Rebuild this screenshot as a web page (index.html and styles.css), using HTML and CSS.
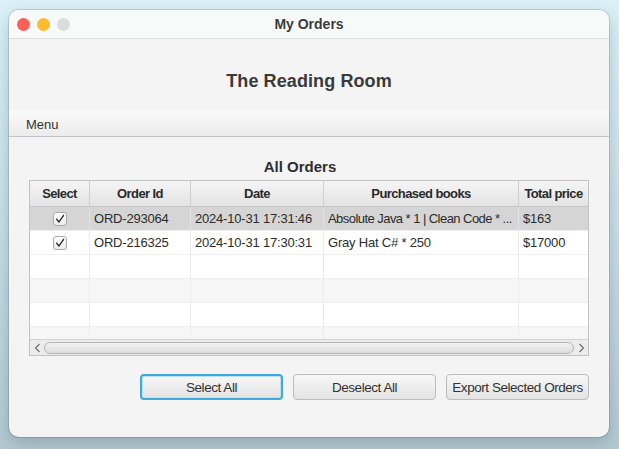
FILE: index.html
```html
<!DOCTYPE html>
<html>
<head>
<meta charset="utf-8">
<link rel="stylesheet" href="styles.css">
</head>
<body>
<div class="window">
  <div class="titlebar">
    <div class="lights">
      <span class="light red"></span>
      <span class="light yellow"></span>
      <span class="light gray"></span>
    </div>
    <div class="wtitle">My Orders</div>
  </div>
  <div class="header">The Reading Room</div>
  <div class="menubar"><span class="menu">Menu</span></div>
  <div class="content">
    <div class="section-title">All Orders</div>
    <div class="table">
      <div class="row head">
        <div class="c center">Select</div>
        <div class="c center">Order Id</div>
        <div class="c center">Date</div>
        <div class="c center">Purchased books</div>
        <div class="c center">Total price</div>
      </div>
      <div class="body">
        <div class="row sel">
          <div class="c center"><span class="cb"><svg width="12" height="12" viewBox="0 0 12 12"><path d="M2.6 6.2 L5 9 L9.6 2.4" fill="none" stroke="#1e1e1e" stroke-width="1.3" stroke-linecap="round" stroke-linejoin="round"/></svg></span></div>
          <div class="c">ORD-293064</div>
          <div class="c">2024-10-31 17:31:46</div>
          <div class="c ell">Absolute Java * 1 | Clean Code * ...</div>
          <div class="c">$163</div>
        </div>
        <div class="row odd">
          <div class="c center"><span class="cb"><svg width="12" height="12" viewBox="0 0 12 12"><path d="M2.6 6.2 L5 9 L9.6 2.4" fill="none" stroke="#1e1e1e" stroke-width="1.3" stroke-linecap="round" stroke-linejoin="round"/></svg></span></div>
          <div class="c">ORD-216325</div>
          <div class="c">2024-10-31 17:30:31</div>
          <div class="c">Gray Hat C# * 250</div>
          <div class="c">$17000</div>
        </div>
        <div class="row"><div class="c"></div><div class="c"></div><div class="c"></div><div class="c"></div><div class="c"></div></div>
        <div class="row odd"><div class="c"></div><div class="c"></div><div class="c"></div><div class="c"></div><div class="c"></div></div>
        <div class="row"><div class="c"></div><div class="c"></div><div class="c"></div><div class="c"></div><div class="c"></div></div>
        <div class="row odd"><div class="c"></div><div class="c"></div><div class="c"></div><div class="c"></div><div class="c"></div></div>
      </div>
      <div class="hscroll">
        <span class="arrow">
          <svg width="7" height="10" viewBox="0 0 7 10"><path d="M5.5 1 L1.5 5 L5.5 9" fill="none" stroke="#6a6a6a" stroke-width="1.1"/></svg>
        </span>
        <span class="thumb"></span>
        <span class="arrow">
          <svg width="7" height="10" viewBox="0 0 7 10"><path d="M1.5 1 L5.5 5 L1.5 9" fill="none" stroke="#6a6a6a" stroke-width="1.1"/></svg>
        </span>
      </div>
    </div>
    <div class="buttons">
      <button class="btn focus">Select All</button>
      <button class="btn">Deselect All</button>
      <button class="btn">Export Selected Orders</button>
    </div>
  </div>
</div>
</body>
</html>
```
FILE: styles.css
```css
html, body {
  margin: 0;
  height: 100%;
}
body {
  background: linear-gradient(180deg, #dcf0f7 0%, #c9dee6 50%, #b4c9d1 100%);
  padding: 10px 0 0 9px;
  box-sizing: border-box;
  font-family: "Liberation Sans", Arial, sans-serif;
  color: #333;
  overflow: hidden;
}
.window {
  width: 600px;
  height: 427px;
  background: #f4f4f4;
  border-radius: 10px;
  overflow: hidden;
  box-shadow: 0 0 0 1px rgba(0,0,0,0.12), 0 6px 16px rgba(40,70,80,0.25);
  display: flex;
  flex-direction: column;
}
.titlebar {
  height: 28px;
  background: #f8f9f9;
  border-bottom: 1px solid #dcdcdc;
  display: flex;
  align-items: center;
  position: relative;
}
.lights {
  display: flex;
  gap: 7px;
  padding-left: 8px;
}
.light {
  width: 13px;
  height: 13px;
  border-radius: 50%;
  display: block;
}
.red { background: #fe5f57; }
.yellow { background: #febc2e; }
.gray { background: #dcdcdc; }
.wtitle {
  position: absolute;
  left: 0;
  right: 0;
  text-align: center;
  font-weight: bold;
  font-size: 14px;
  color: #3c3c3c;
  pointer-events: none;
}
.header {
  height: 71px;
  display: flex;
  align-items: center;
  justify-content: center;
  padding-top: 14px;
  box-sizing: border-box;
  font-weight: bold;
  font-size: 18px;
  letter-spacing: 0.1px;
  color: #3a3a3a;
}
.menubar {
  background: linear-gradient(180deg, #fafafa 0%, #ececec 100%);
  border-bottom: 1px solid #c4c4c4;
  display: flex;
  align-items: center;
  padding: 2px 0 0 17px;
  box-sizing: content-box;
  height: 24px;
  font-size: 13px;
  color: #333;
}
.content {
  padding: 0 20px 0 20px;
  display: flex;
  flex-direction: column;
}
.section-title {
  text-align: center;
  font-weight: bold;
  font-size: 15px;
  color: #2e2e2e;
  height: 43px;
  line-height: 18px;
  padding: 21px 18px 0 0;
  box-sizing: border-box;
}
.table {
  width: 560px;
  height: 176px;
  border: 1px solid #c2c2c2;
  box-sizing: border-box;
  background: #fff;
  display: flex;
  flex-direction: column;
  overflow: hidden;
}
.row {
  display: grid;
  grid-template-columns: 60px 101px 133px 195px 69px;
  height: 24px;
  font-size: 13px;
}
.row .c {
  border-right: 1px solid #ececec;
  padding: 0 4px;
  display: flex;
  align-items: center;
  white-space: nowrap;
  overflow: hidden;
  color: #2c2c2c;
  letter-spacing: -0.2px;
}
.row .c:last-child { border-right: none; }
.row .center { justify-content: center; }
.row .ell {
  letter-spacing: -0.55px;
}
.head {
  height: 25px;
  background: linear-gradient(180deg, #f5f5f5 0%, #e3e3e3 100%);
  border-bottom: 1px solid #c8c8c8;
  font-weight: bold;
}
.head .c {
  border-right: 1px solid #cfcfcf;
  color: #2a2a2a;
  letter-spacing: -0.6px;
}
.body {
  flex: 1;
  overflow: hidden;
}
.body .row { border-bottom: 1px solid #efefef; height: 23px; }
.sel { background: #d5d5d5; }
.sel .c { border-right-color: #e2e2e2; }
.odd { background: #fafafa; }
.body .row:nth-child(4), .body .row:nth-child(6) { background: #f6f6f6; }
.body .row:nth-child(2) { background: #fff; }
.cb {
  width: 14px;
  height: 14px;
  border: 1px solid #ababab;
  border-radius: 3px;
  background: linear-gradient(180deg, #fdfdfd, #ececec);
  box-sizing: border-box;
  display: flex;
  align-items: center;
  justify-content: center;
}
.hscroll {
  height: 15px;
  flex: none;
  background: #ececec;
  border-top: 1px solid #d2d2d2;
  display: flex;
  align-items: center;
  padding: 0 3px;
  gap: 3px;
}
.arrow {
  width: 8px;
  display: flex;
  align-items: center;
  justify-content: center;
}
.thumb {
  flex: 1;
  height: 10px;
  border: 1px solid #b6b6b6;
  border-radius: 6px;
  background: linear-gradient(180deg, #f2f2f2, #dcdcdc);
}
.buttons {
  display: flex;
  justify-content: flex-end;
  gap: 10px;
  margin-top: 18px;
}
.btn {
  width: 143px;
  height: 26px;
  border: 1px solid #bcbcbc;
  border-radius: 4px;
  background: linear-gradient(180deg, #f7f7f7 0%, #e3e3e3 100%);
  font-family: "Liberation Sans", Arial, sans-serif;
  font-size: 13.5px;
  letter-spacing: -0.45px;
  color: #333;
  padding: 0;
}
.btn.focus {
  border: 2px solid #3fa9de;
  box-shadow: inset 0 0 0 1px #bfe3f5;
}
```
